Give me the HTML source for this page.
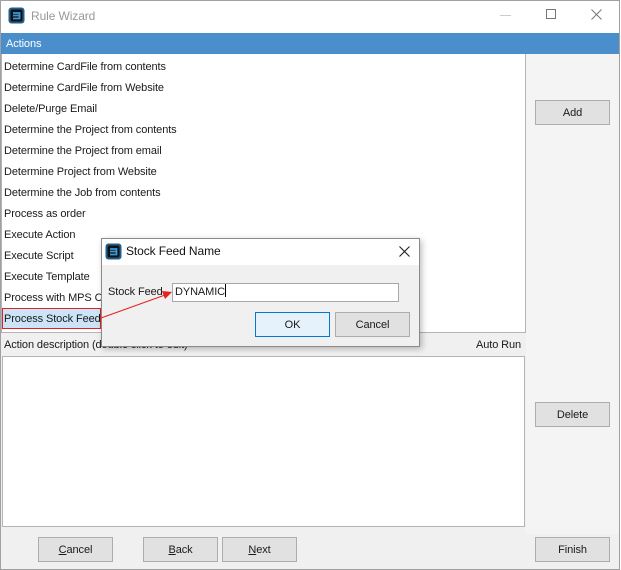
<!DOCTYPE html>
<html><head><meta charset="utf-8"><style>
*{box-sizing:border-box;margin:0;padding:0}
body{width:621px;height:570px;overflow:hidden;background:#fff;font-family:"Liberation Sans",sans-serif;font-size:11px;letter-spacing:-0.1px;color:#1a1a1a;position:relative}
.a{position:absolute}
.win{left:0;top:0;width:620px;height:570px;border:1px solid #a0a0a0;background:#f0f0f0}
.btn{position:absolute;background:#e1e1e1;border:1px solid #adadad;text-align:center;font-size:11px;color:#1a1a1a;line-height:24px!important}
.row{position:absolute;left:4px;height:21px;line-height:21px;white-space:nowrap}
u{text-decoration:underline}
</style></head><body>
<div class="a win"></div>
<div class="a" style="left:1px;top:1px;width:618px;height:32px;background:#fff"></div>
<svg class="a" style="left:8px;top:7px" width="17" height="17" viewBox="0 0 17 17"><rect x="0.5" y="0.5" width="16" height="16" rx="3" fill="#1e5f8f"/><rect x="2.5" y="2.5" width="12" height="12" rx="2" fill="#111"/><path d="M5 8.5h7M5 6h6.5v5.5H5" stroke="#3a9ad9" stroke-width="1.8" fill="none"/></svg>
<div class="a" style="left:31px;top:9px;font-size:12px;color:#999">Rule Wizard</div>
<div class="a" style="left:500px;top:15px;width:11px;height:1px;background:#ccc"></div>
<div class="a" style="left:546px;top:9px;width:10px;height:10px;border:1px solid #777"></div>
<svg class="a" style="left:591px;top:9px" width="11" height="11"><path d="M0.5 0.5L10.5 10.5M10.5 0.5L0.5 10.5" stroke="#777" stroke-width="1"/></svg>
<div class="a" style="left:1px;top:33px;width:618px;height:21px;background:#4a8fcb;color:#fff;line-height:22px;padding-left:5px">Actions</div>
<div class="a" style="left:1px;top:54px;width:525px;height:279px;background:#fff;border:1px solid #b4b4b4;border-top:none"></div>
<div class="a" style="left:526px;top:54px;width:93px;height:480px;background:#f4f4f4"></div>
<div class="row" style="top:57px">Determine CardFile from contents</div>
<div class="row" style="top:78px">Determine CardFile from Website</div>
<div class="row" style="top:99px">Delete/Purge Email</div>
<div class="row" style="top:120px">Determine the Project from contents</div>
<div class="row" style="top:141px">Determine the Project from email</div>
<div class="row" style="top:162px">Determine Project from Website</div>
<div class="row" style="top:183px">Determine the Job from contents</div>
<div class="row" style="top:204px">Process as order</div>
<div class="row" style="top:225px">Execute Action</div>
<div class="row" style="top:246px">Execute Script</div>
<div class="row" style="top:267px">Execute Template</div>
<div class="row" style="top:288px">Process with MPS Conversion</div>
<div class="a" style="left:2px;top:308px;width:99px;height:21px;background:#cce4f7;border:1px solid #e52020"></div>
<div class="row" style="top:309px">Process Stock Feed</div>
<div class="a" style="left:4px;top:339px">Action description (double click to edit)</div>
<div class="a" style="left:476px;top:339px">Auto Run</div>
<div class="a" style="left:2px;top:356px;width:523px;height:171px;background:#fff;border:1px solid #b4b4b4"></div>
<div class="btn" style="left:535px;top:100px;width:75px;height:25px">Add</div>
<div class="btn" style="left:535px;top:402px;width:75px;height:25px">Delete</div>
<div class="btn" style="left:38px;top:537px;width:75px;height:25px"><u>C</u>ancel</div>
<div class="btn" style="left:143px;top:537px;width:75px;height:25px"><u>B</u>ack</div>
<div class="btn" style="left:222px;top:537px;width:75px;height:25px"><u>N</u>ext</div>
<div class="btn" style="left:535px;top:537px;width:75px;height:25px">Finish</div>
<!-- dialog -->
<div class="a" style="left:101px;top:238px;width:319px;height:109px;background:#f0f0f0;border:1px solid #8a8a8a;box-shadow:2px 2px 6px rgba(0,0,0,.25)"></div>
<div class="a" style="left:102px;top:239px;width:317px;height:26px;background:#fff"></div>
<svg class="a" style="left:105px;top:243px" width="17" height="17" viewBox="0 0 17 17"><rect x="0.5" y="0.5" width="16" height="16" rx="3" fill="#1e5f8f"/><rect x="2.5" y="2.5" width="12" height="12" rx="2" fill="#111"/><path d="M5 8.5h7M5 6h6.5v5.5H5" stroke="#3a9ad9" stroke-width="1.8" fill="none"/></svg>
<div class="a" style="left:126px;top:244px;font-size:12px;color:#111">Stock Feed Name</div>
<svg class="a" style="left:399px;top:246px" width="11" height="11"><path d="M0.5 0.5L10.5 10.5M10.5 0.5L0.5 10.5" stroke="#222" stroke-width="1.1"/></svg>
<div class="a" style="left:108px;top:286px">Stock Feed</div>
<div class="a" style="left:172px;top:283px;width:227px;height:19px;background:#fff;border:1px solid #a8a8a8;padding-left:2px;line-height:17px">DYNAMIC<span style="display:inline-block;width:1px;height:13px;background:#000;vertical-align:-2px"></span></div>
<div class="btn" style="left:255px;top:312px;width:75px;height:25px;background:#e5f1fb;border-color:#0078d7">OK</div>
<div class="btn" style="left:335px;top:312px;width:75px;height:25px">Cancel</div>
<svg class="a" style="left:0;top:0" width="621" height="570"><path d="M101 318L165 295" stroke="#e52020" stroke-width="1"/><path d="M172 292L162 291L165 299Z" fill="#e52020"/></svg>
</body></html>
